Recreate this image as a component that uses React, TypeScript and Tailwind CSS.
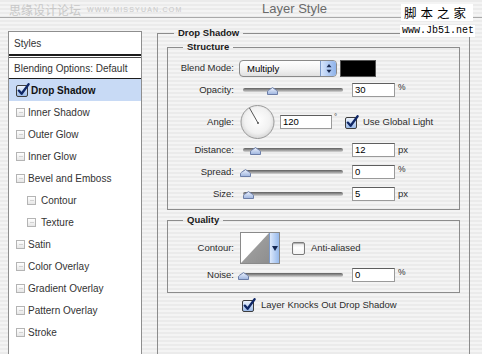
import React from "react";

function CheckOn({ id }: { id: string }) {
  return (
    <svg width="14" height="14" viewBox="0 0 14 14" className="shrink-0">
      <defs>
        <linearGradient id={id} x1="0" y1="0" x2="0" y2="1">
          <stop offset="0" stopColor="#f2f7ff" />
          <stop offset="1" stopColor="#97b8e8" />
        </linearGradient>
      </defs>
      <rect x="0.5" y="2.5" width="11" height="11" rx="1.5" fill={`url(#${id})`} stroke="#3e3e3e" />
      <path d="M2.8 7.6 L5.6 10.8 L12.6 1.2" fill="none" stroke="#0f2766" strokeWidth="2.3" strokeLinecap="round" strokeLinejoin="round" />
    </svg>
  );
}

function ListBox() {
  return (
    <div className="flex h-[9px] w-[9px] shrink-0 items-center justify-center border border-[#b4b4b4] bg-[linear-gradient(180deg,#ffffff,#e6e6e6)]">
      <div className="h-[1px] w-[4px] bg-[#d2d2d2]" />
    </div>
  );
}

function AquaBox() {
  return (
    <div className="h-[13px] w-[13px] shrink-0 rounded-[2px] border border-[#7a7a7a] bg-[linear-gradient(180deg,#e4e4e4,#ffffff_40%,#f4f4f4)] shadow-[inset_0_1px_1px_rgba(0,0,0,0.25)]" />
  );
}

function Thumb() {
  return (
    <svg width="11" height="8" viewBox="0 0 11 8">
      <defs>
        <linearGradient id="thumbg" x1="0" y1="0" x2="0" y2="1">
          <stop offset="0" stopColor="#eef3fd" />
          <stop offset="1" stopColor="#9db4df" />
        </linearGradient>
      </defs>
      <path d="M0.5 7.5 L0.5 4.8 Q0.5 4 1.5 3.3 L5.5 0.6 L9.5 3.3 Q10.5 4 10.5 4.8 L10.5 7.5 Z" fill="url(#thumbg)" stroke="#6c7ea8" />
    </svg>
  );
}

function Slider({ pos }: { pos: number }) {
  return (
    <div className="relative ml-[9px] h-[14px] w-[100px] shrink-0">
      <div className="absolute left-0 right-0 top-[5px] h-[4px] rounded-full bg-[linear-gradient(180deg,#5e5e5e,#9c9c9c_55%,#d6d6d6)]" />
      <div className="absolute top-[4px]" style={{ left: pos - 5.5 }}>
        <Thumb />
      </div>
    </div>
  );
}

function Field({ v }: { v: string }) {
  return (
    <div className="ml-[9px] flex h-[14px] w-[43px] shrink-0 items-center border border-[#9a9a9a] border-t-[#5e5e5e] bg-white pl-[2px] text-[9.5px] leading-[12px] text-black">
      {v}
    </div>
  );
}

function SliderRow({ label, pos, v, unit, mt }: { label: string; pos: number; v: string; unit: string; mt: string }) {
  return (
    <div className={`flex h-[14px] items-center ${mt}`}>
      <div className="w-[66px] shrink-0 text-right">{label}</div>
      <Slider pos={pos} />
      <Field v={v} />
      {unit === "%" ? (
        <span className="ml-[3px] self-start text-[8.5px] leading-[9px]">%</span>
      ) : (
        <span className="ml-[3px] text-[9.5px] leading-[12px]">px</span>
      )}
    </div>
  );
}

const items: { name: string; indent?: boolean }[] = [
  { name: "Inner Shadow" },
  { name: "Outer Glow" },
  { name: "Inner Glow" },
  { name: "Bevel and Emboss" },
  { name: "Contour", indent: true },
  { name: "Texture", indent: true },
  { name: "Satin" },
  { name: "Color Overlay" },
  { name: "Gradient Overlay" },
  { name: "Pattern Overlay" },
  { name: "Stroke" },
];

export default function App() {
  return (
    <div className="relative h-[354px] w-[482px] overflow-hidden bg-[repeating-linear-gradient(180deg,#ebebeb_0px,#ebebeb_2px,#f4f4f4_2px,#f4f4f4_4px)] font-['Liberation_Sans',Arial,sans-serif] text-[#2c2c2c]">
      <div className="flex h-[18px] items-center border-b border-[#a9a9a9] pl-[262px]">
        <span className="text-[13px] leading-[15px] text-[#6a6a6a]">Layer Style</span>
      </div>

      <div className="flex items-start pl-[8px]">
        <div className="mt-[13px] h-[330px] w-[134px] shrink-0 border border-[#8e8e8e] bg-white text-[10px] text-[#333]">
          <div className="flex h-[24px] items-center border-b-2 border-[#1c1c1c] pl-[5px]">Styles</div>
          <div className="h-[2px] border-b border-[#4a4a4a]" />
          <div className="flex h-[21px] items-center border-b border-[#1c1c1c] pl-[5px]">Blending Options: Default</div>
          <div className="flex h-[22px] items-center bg-[#c8daf5] pl-[7px]">
            <CheckOn id="cb1" />
            <span className="ml-[1px] font-bold text-[#111]">Drop Shadow</span>
          </div>
          {items.map((it) => (
            <div key={it.name} className={`flex h-[22px] items-center ${it.indent ? "pl-[18px]" : "pl-[7px]"}`}>
              <ListBox />
              <span className={it.indent ? "ml-[5px]" : "ml-[3px]"}>{it.name}</span>
            </div>
          ))}
        </div>

        <fieldset className="ml-[15px] mt-[9px] h-[340px] w-[313px] shrink-0 border border-[#8c8c8c] text-[9.5px]">
          <legend className="ml-[16px] px-[4px] text-[9.5px] font-bold leading-[12px] text-[#1a1a1a]">Drop Shadow</legend>

          <fieldset className="mx-[9px] mt-[2px] border border-[#8c8c8c] pb-[8px] pt-[7px]">
            <legend className="ml-[15px] px-[4px] text-[9.5px] font-bold leading-[12px] text-[#1a1a1a]">Structure</legend>

            <div className="flex h-[17px] items-center">
              <div className="w-[66px] shrink-0 text-right">Blend Mode:</div>
              <div className="ml-[5px] flex h-[17px] w-[98px] shrink-0 overflow-hidden rounded-[4px] border border-[#8a8a8a] bg-[linear-gradient(180deg,#ffffff,#f3f3f3_55%,#e0e0e0)]">
                <span className="flex-1 pl-[7px] text-[9.5px] leading-[15px] text-black">Multiply</span>
                <div className="flex w-[16px] items-center justify-center border-l border-[#7d9ac8] bg-[linear-gradient(90deg,#d6e4fa,#8db2ea)]">
                  <svg width="6" height="11" viewBox="0 0 6 11">
                    <path d="M3 1 L5.5 4.2 H0.5 Z" fill="#1a2a50" />
                    <path d="M3 10 L5.5 6.8 H0.5 Z" fill="#1a2a50" />
                  </svg>
                </div>
              </div>
              <div className="ml-[3px] h-[17px] w-[36px] shrink-0 border border-[#555] bg-black" />
            </div>

            <SliderRow label="Opacity:" pos={29.5} v="30" unit="%" mt="mt-[6px]" />

            <div className="mt-[7px] flex h-[36px] items-center">
              <div className="w-[66px] shrink-0 text-right">Angle:</div>
              <svg width="35" height="36" viewBox="0 0 35 36" className="ml-[6px] shrink-0">
                <defs>
                  <radialGradient id="dial" cx="0.5" cy="0.45" r="0.6">
                    <stop offset="0" stopColor="#ffffff" />
                    <stop offset="0.65" stopColor="#f1f1f1" />
                    <stop offset="1" stopColor="#cdcdcd" />
                  </radialGradient>
                </defs>
                <circle cx="17.5" cy="18" r="16.5" fill="url(#dial)" stroke="#9a9a9a" />
                <line x1="18" y1="19" x2="9.5" y2="4" stroke="#555" strokeWidth="1" />
                <circle cx="18" cy="19" r="1" fill="#555" />
              </svg>
              <div className="ml-[5px] flex h-[14px] w-[52px] shrink-0 items-center border border-[#9a9a9a] border-t-[#5e5e5e] bg-white pl-[2px] text-[9.5px] leading-[12px] text-black">120</div>
              <span className="ml-[2px] mt-[9px] w-[5px] self-start text-[8px] leading-[8px]">°</span>
              <div className="ml-[6px]">
                <CheckOn id="cb2" />
              </div>
              <span className="ml-[4px] text-[9.5px]">Use Global Light</span>
            </div>

            <SliderRow label="Distance:" pos={12.5} v="12" unit="px" mt="mt-[3px]" />
            <SliderRow label="Spread:" pos={2} v="0" unit="%" mt="mt-[8px]" />
            <SliderRow label="Size:" pos={5.5} v="5" unit="px" mt="mt-[8px]" />
          </fieldset>

          <fieldset className="mx-[9px] mt-[4px] border border-[#8c8c8c] pb-[10px] pt-[6px]">
            <legend className="ml-[15px] px-[4px] text-[9.5px] font-bold leading-[12px] text-[#1a1a1a]">Quality</legend>

            <div className="flex h-[32px] items-center">
              <div className="w-[66px] shrink-0 text-right">Contour:</div>
              <div className="ml-[6px] flex h-[32px] w-[40px] shrink-0 border border-[#8a8a8a] bg-white">
                <svg width="28" height="30" viewBox="0 0 28 30" className="shrink-0">
                  <defs>
                    <linearGradient id="cg" x1="0" y1="0" x2="1" y2="1">
                      <stop offset="0" stopColor="#a8a8a8" />
                      <stop offset="1" stopColor="#8e8e8e" />
                    </linearGradient>
                  </defs>
                  <polygon points="0,30 28,0 28,30" fill="url(#cg)" />
                </svg>
                <div className="flex w-[10px] items-center justify-center border-l border-[#7d9ac8] bg-[linear-gradient(90deg,#dce8fb,#96b9ec)]">
                  <svg width="6" height="5" viewBox="0 0 6 5">
                    <path d="M0 0 H6 L3 5 Z" fill="#132652" />
                  </svg>
                </div>
              </div>
              <div className="ml-[12px]">
                <AquaBox />
              </div>
              <span className="ml-[6px]">Anti-aliased</span>
            </div>

            <SliderRow label="Noise:" pos={0.5} v="0" unit="%" mt="mt-[4px]" />
          </fieldset>

          <div className="ml-[84px] mt-[5px] flex h-[14px] items-center">
            <CheckOn id="cb3" />
            <span className="ml-[5px]">Layer Knocks Out Drop Shadow</span>
          </div>
        </fieldset>
      </div>

      <div className="absolute left-[9px] top-[3px] flex items-center gap-[6px] text-[#c8c8c8]">
        <span className="font-['Noto_Sans_CJK_SC',sans-serif] text-[12px] leading-[14px]">思缘设计论坛</span>
        <span className="text-[7px] leading-[8px] tracking-[1.2px]">WWW.MISSYUAN.COM</span>
      </div>
      <div className="absolute left-[401px] top-[4px] w-[72px] bg-white pl-[3px] font-['Noto_Sans_CJK_SC',sans-serif] text-[12.5px] leading-[17px] tracking-[4px] text-black">
        脚本之家
      </div>
      <div className="absolute left-[400px] top-[25px] w-[75px] bg-white pl-[2px] font-['Liberation_Mono',monospace] text-[10px] leading-[12px] text-black">
        www.Jb51.net
      </div>
    </div>
  );
}
